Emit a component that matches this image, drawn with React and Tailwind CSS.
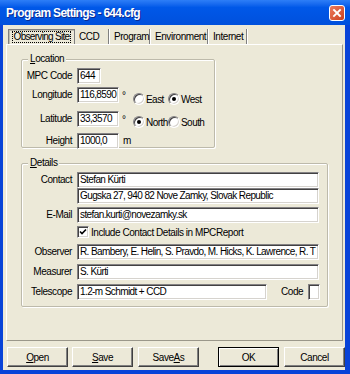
import React from 'react';

const field =
  'h-[16px] bg-white border border-t-[#848284] border-l-[#848284] border-b-white border-r-white shadow-[inset_1px_1px_0_#424142,inset_-1px_-1px_0_#d6d3ce] pl-[2px] leading-[14px] whitespace-nowrap overflow-hidden tracking-[-0.6px]';

const Label = ({ children }) => (
  <span className="w-[50px] mr-[5px] shrink-0 text-right leading-[16px] whitespace-nowrap">{children}</span>
);

const Radio = ({ checked, label, w }) => (
  <span className="flex items-center shrink-0" style={{ width: w }}>
    <span className="w-[12px] h-[12px] shrink-0 rounded-full bg-white border border-t-[#848284] border-l-[#848284] border-b-white border-r-white shadow-[inset_1px_1px_0_#424142,inset_-1px_-1px_0_#d6d3ce] flex items-center justify-center">
      {checked && <span className="w-[4px] h-[4px] rounded-full bg-black" />}
    </span>
    <span className="ml-[1px] whitespace-nowrap tracking-[-0.55px]">{label}</span>
  </span>
);

const GroupBox = ({ legend, className, children }) => (
  <div className={`relative border border-[#bdbaab] rounded-[2px] shadow-[inset_1px_1px_0_#fff,1px_1px_0_#fff] ${className}`}>
    <span className="absolute -top-[8px] left-[6px] px-[2px] bg-[#ece9d8] leading-[14px]">
      <u>{legend[0]}</u>{legend.slice(1)}
    </span>
    {children}
  </div>
);

const Button = ({ children, def, className = '' }) => (
  <button
    className={`w-[61px] h-[20px] flex items-center justify-center bg-[#ece9d8] ${
      def
        ? 'border border-black shadow-[inset_1px_1px_0_#fff,inset_-1px_-1px_0_#808080]'
        : 'border border-t-white border-l-white border-b-[#404040] border-r-[#404040] shadow-[inset_-1px_-1px_0_#808080]'
    } ${className}`}
  >
    {children}
  </button>
);

export default function App() {
  return (
    <div className="w-[350px] h-[374px] bg-[#0843d8] flex flex-col font-['Liberation_Sans',Arial,sans-serif] text-[10px] tracking-[-0.45px] text-black">
      {/* title bar */}
      <div className="h-[25px] shrink-0 flex items-center justify-between pl-[6px] pr-[5px] bg-gradient-to-b from-[#2d7ef7] via-[#0058e8] via-30% to-[#0050dc]">
        <span className="text-white font-bold text-[12px] tracking-[-0.7px] [text-shadow:1px_1px_0_#0b2a8f]">
          Program Settings - 644.cfg
        </span>
        <span className="w-[16px] h-[16px] rounded-[3px] border border-white bg-gradient-to-br from-[#ec7a5c] to-[#cc3f1c] flex items-center justify-center">
          <svg width="10" height="10" viewBox="0 0 10 10">
            <path d="M2 2 L8 8 M8 2 L2 8" stroke="white" strokeWidth="1.9" strokeLinecap="square" />
          </svg>
        </span>
      </div>

      {/* client area */}
      <div className="flex-1 ml-[3px] mr-[5px] mb-[4px] bg-[#ece9d8] flex flex-col">
        {/* tabs */}
        <div className="mt-[4px] ml-[5px] h-[15px] flex">
          <span className="w-[67px] h-[15px] shrink-0 flex items-center justify-center border-l border-t border-r border-[#808080] shadow-[inset_1px_1px_0_#c0bdae]">
            <span className="border border-dotted border-black px-[1px] leading-[10px] whitespace-nowrap tracking-[-0.7px]">Observing Site</span>
          </span>
          {[
            ['CCD', 34],
            ['Program', 40],
            ['Environment', 57],
            ['Internet', 38],
          ].map(([t, w]) => (
            <span
              key={t}
              className="h-[15px] shrink-0 flex items-center pl-[4px] border-r border-[#808080] shadow-[1px_0_0_#fff] mr-[1px] whitespace-nowrap"
              style={{ width: w }}
            >
              {t}
            </span>
          ))}
        </div>

        {/* tab sheet */}
        <div className="ml-[3px] w-[337px] h-[297px] border border-t-white border-l-white border-r-[#9a978a] border-b-[#9a978a] pl-[14px] pt-[14px]">
          <GroupBox legend="Location" className="w-[194px] h-[89px] pt-[8px] flex flex-col">
            <div className="flex">
              <Label>MPC Code</Label>
              <div className={`${field} w-[24px]`}>644</div>
            </div>
            <div className="flex mt-[3px]">
              <Label>Longitude</Label>
              <div className={`${field} w-[42px]`}>116,8590</div>
              <span className="w-[14px] pl-[3px] leading-[8px] pt-[5px]">°</span>
              <div className="flex mt-[4px] h-[16px]">
                <Radio label="East" w={35} />
                <Radio label="West" checked w={40} />
              </div>
            </div>
            <div className="flex mt-[4px]">
              <Label>Latitude</Label>
              <div className={`${field} w-[42px]`}>33,3570</div>
              <span className="w-[14px] pl-[3px] leading-[8px] pt-[5px]">°</span>
              <div className="flex mt-[3px] h-[16px]">
                <Radio label="North" checked w={35} />
                <Radio label="South" w={40} />
              </div>
            </div>
            <div className="flex mt-[3px]">
              <Label>Height</Label>
              <div className={`${field} w-[42px]`}>1000,0</div>
              <span className="ml-[4px] leading-[16px]">m</span>
            </div>
          </GroupBox>

          <GroupBox legend="Details" className="mt-[15px] w-[307px] h-[144px] pt-[8px] flex flex-col">
            <div className="flex">
              <Label>Contact</Label>
              <div className={`${field} w-[242px]`}>Stefan Kürti</div>
            </div>
            <div className="flex">
              <span className="w-[55px] shrink-0" />
              <div className={`${field} w-[242px]`}>Gugska 27, 940 82 Nove Zamky, Slovak Republic</div>
            </div>
            <div className="flex mt-[3px]">
              <Label>E-Mail</Label>
              <div className={`${field} w-[242px]`}>stefan.kurti@novezamky.sk</div>
            </div>
            <div className="flex items-center h-[16px] mt-[1px] pl-[55px]">
              <span className="w-[12px] h-[12px] bg-white border border-t-[#848284] border-l-[#848284] border-b-white border-r-white shadow-[inset_1px_1px_0_#424142,inset_-1px_-1px_0_#d6d3ce] flex items-center justify-center">
                <svg width="8" height="8" viewBox="0 0 8 8">
                  <path d="M1 3.5 L3 5.5 L7 1.5" stroke="black" strokeWidth="1.6" fill="none" />
                </svg>
              </span>
              <span className="ml-[2px]">Include Contact Details in MPCReport</span>
            </div>
            <div className="flex mt-[4px]">
              <Label>Observer</Label>
              <div className={`${field} w-[242px]`}>R. Bambery, E. Helin, S. Pravdo, M. Hicks, K. Lawrence, R. T</div>
            </div>
            <div className="flex mt-[4px]">
              <Label>Measurer</Label>
              <div className={`${field} w-[242px]`}>S. Kürti</div>
            </div>
            <div className="flex mt-[4px]">
              <Label>Telescope</Label>
              <div className={`${field} w-[190px]`}>1.2-m Schmidt + CCD</div>
              <span className="ml-[14px] leading-[16px]">Code</span>
              <div className={`${field} w-[12px] ml-[5px]`} />
            </div>
          </GroupBox>
        </div>

        {/* buttons */}
        <div className="mt-[6px] ml-[4px] flex">
          <Button><u>O</u>pen</Button>
          <Button className="ml-[4px]"><u>S</u>ave</Button>
          <Button className="ml-[5px] w-[60px]">Save <u>A</u>s</Button>
          <Button def className="ml-[19px]">OK</Button>
          <Button className="ml-[5px]">Cancel</Button>
        </div>
      </div>
    </div>
  );
}
